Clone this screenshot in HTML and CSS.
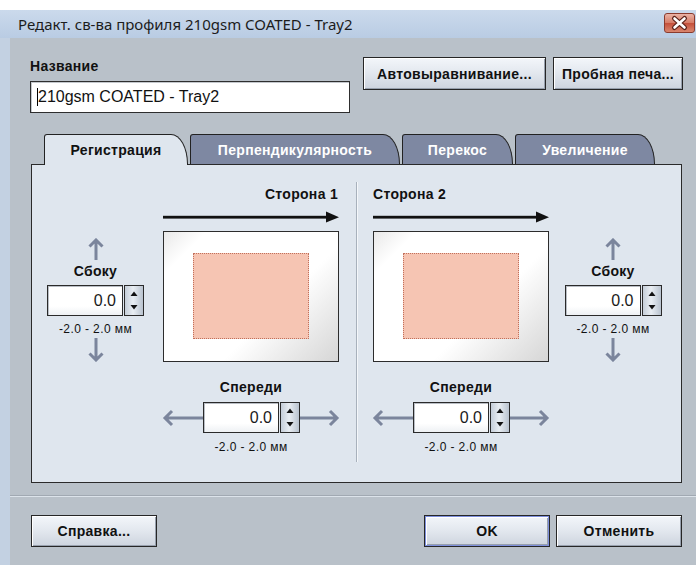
FILE: index.html
```html
<!DOCTYPE html>
<html lang="ru">
<head>
  <meta charset="UTF-8" />
  <title>Редакт. св-ва профиля</title>
  <link rel="stylesheet" href="styles.css">
</head>
<body>
  <div class="window">
    <div class="titlebar">
      <span class="title-text">Редакт. св-ва профиля 210gsm COATED - Tray2</span>
      <div class="close-btn">
        <svg width="29" height="18" viewBox="0 0 29 18">
          <path d="M9.5 4.5 L19.5 13.5 M19.5 4.5 L9.5 13.5" stroke="#5a2118" stroke-width="5" stroke-linecap="round" fill="none"/>
          <path d="M9.5 4.5 L19.5 13.5 M19.5 4.5 L9.5 13.5" stroke="#fff" stroke-width="2.6" stroke-linecap="round" fill="none"/>
        </svg>
      </div>
    </div>

    <div class="dialog">
      <div class="top-row">
        <div class="name-group">
          <span class="lbl">Название</span>
          <div class="name-field"><span class="caret"></span>210gsm COATED - Tray2</div>
        </div>
        <div class="top-buttons">
          <div class="btn btn-auto">Автовыравнивание...</div>
          <div class="btn btn-proof">Пробная печа...</div>
        </div>
      </div>

      <div class="tabs">
        <div class="tab active tab-reg">Регистрация</div>
        <div class="tab tab-perp">Перпендикулярность</div>
        <div class="tab tab-skew">Перекос</div>
        <div class="tab tab-zoom">Увеличение</div>
      </div>

      <div class="panel">
        <!-- Сторона 1 -->
        <div class="half half-left">
          <div class="side-title">Сторона 1</div>
          <svg class="feed-arrow" width="176" height="12" viewBox="0 0 176 12">
            <rect x="0" y="4.8" width="166" height="2.8" fill="#111"/>
            <polygon points="163,0.5 176,6.2 163,11.5" fill="#111"/>
          </svg>
          <div class="side-ctl">
            <svg width="16" height="22" viewBox="0 0 16 22"><path d="M8 22 V2 M1.5 8.5 L8 2 L14.5 8.5" stroke="#7b859c" stroke-width="3" fill="none"/></svg>
            <span class="lbl side-lbl">Сбоку</span>
            <div class="spinner">
              <div class="spin-value">0.0</div>
              <div class="spin-btns">
                <svg width="18" height="29" viewBox="0 0 18 29"><polygon points="5.5,10 9,5.5 12.5,10" fill="#111"/><polygon points="5.5,19 9,23.5 12.5,19" fill="#111"/></svg>
              </div>
            </div>
            <span class="range side-range">-2.0 - 2.0 мм</span>
            <svg class="down-arrow" width="16" height="24" viewBox="0 0 16 24"><path d="M8 0 V22 M1.5 15.5 L8 22 L14.5 15.5" stroke="#7b859c" stroke-width="3" fill="none"/></svg>
          </div>
          <div class="sheet"><div class="image-area"></div></div>
          <div class="front-ctl">
            <span class="lbl">Спереди</span>
            <div class="front-row">
              <svg width="41" height="18" viewBox="0 0 41 18"><path d="M41 9 H3 M10 2 L3 9 L10 16" stroke="#7b859c" stroke-width="3" fill="none"/></svg>
              <div class="spinner">
                <div class="spin-value">0.0</div>
                <div class="spin-btns">
                  <svg width="18" height="29" viewBox="0 0 18 29"><polygon points="5.5,10 9,5.5 12.5,10" fill="#111"/><polygon points="5.5,19 9,23.5 12.5,19" fill="#111"/></svg>
                </div>
              </div>
              <svg width="40" height="18" viewBox="0 0 40 18"><path d="M0 9 H37 M30 2 L37 9 L30 16" stroke="#7b859c" stroke-width="3" fill="none"/></svg>
            </div>
            <span class="range">-2.0 - 2.0 мм</span>
          </div>
        </div>

        <div class="divider"></div>

        <!-- Сторона 2 -->
        <div class="half half-right">
          <div class="side-title">Сторона 2</div>
          <svg class="feed-arrow" width="176" height="12" viewBox="0 0 176 12">
            <rect x="0" y="4.8" width="166" height="2.8" fill="#111"/>
            <polygon points="163,0.5 176,6.2 163,11.5" fill="#111"/>
          </svg>
          <div class="sheet"><div class="image-area"></div></div>
          <div class="side-ctl">
            <svg width="16" height="22" viewBox="0 0 16 22"><path d="M8 22 V2 M1.5 8.5 L8 2 L14.5 8.5" stroke="#7b859c" stroke-width="3" fill="none"/></svg>
            <span class="lbl side-lbl">Сбоку</span>
            <div class="spinner">
              <div class="spin-value">0.0</div>
              <div class="spin-btns">
                <svg width="18" height="29" viewBox="0 0 18 29"><polygon points="5.5,10 9,5.5 12.5,10" fill="#111"/><polygon points="5.5,19 9,23.5 12.5,19" fill="#111"/></svg>
              </div>
            </div>
            <span class="range side-range">-2.0 - 2.0 мм</span>
            <svg class="down-arrow" width="16" height="24" viewBox="0 0 16 24"><path d="M8 0 V22 M1.5 15.5 L8 22 L14.5 15.5" stroke="#7b859c" stroke-width="3" fill="none"/></svg>
          </div>
          <div class="front-ctl">
            <span class="lbl">Спереди</span>
            <div class="front-row">
              <svg width="41" height="18" viewBox="0 0 41 18"><path d="M41 9 H3 M10 2 L3 9 L10 16" stroke="#7b859c" stroke-width="3" fill="none"/></svg>
              <div class="spinner">
                <div class="spin-value">0.0</div>
                <div class="spin-btns">
                  <svg width="18" height="29" viewBox="0 0 18 29"><polygon points="5.5,10 9,5.5 12.5,10" fill="#111"/><polygon points="5.5,19 9,23.5 12.5,19" fill="#111"/></svg>
                </div>
              </div>
              <svg width="40" height="18" viewBox="0 0 40 18"><path d="M0 9 H37 M30 2 L37 9 L30 16" stroke="#7b859c" stroke-width="3" fill="none"/></svg>
            </div>
            <span class="range">-2.0 - 2.0 мм</span>
          </div>
        </div>
      </div>

      <div class="footer">
        <div class="btn btn-foot">Справка...</div>
        <div class="footer-right">
          <div class="btn btn-foot btn-default">OK</div>
          <div class="btn btn-foot">Отменить</div>
        </div>
      </div>
    </div>
  </div>
</body>
</html>
```

FILE: styles.css
```css
* {
  box-sizing: border-box;
}
body {
  margin: 0;
  background: #fff;
  font-family: "Liberation Sans", Arial, sans-serif;
  color: #111;
}
.window {
  margin-top: 10px;
  width: 696px;
  height: 555px;
  display: flex;
  flex-direction: column;
}

/* title bar */
.titlebar {
  height: 28px;
  flex: none;
  display: flex;
  justify-content: space-between;
  background: linear-gradient(#cbdaec, #b9cce3);
}
.title-text {
  font-family: "Noto Sans", "Open Sans", sans-serif;
  font-size: 15px;
  line-height: 28px;
  padding-left: 18px;
  color: #1c1c1c;
}
.close-btn {
  width: 31px;
  height: 20px;
  margin: 3px 1px 0 0;
  border: 1px solid #8a3b2e;
  border-radius: 3px;
  background: linear-gradient(#eab3a6, #d77d68 48%, #c5503b 52%, #d9866f);
}
.close-btn svg {
  display: block;
}

/* dialog body */
.dialog {
  flex: 1;
  background: #b9c1c9;
  border-left: 10px solid #c3d1e2;
  display: flex;
  flex-direction: column;
}
.lbl {
  display: block;
  font-weight: bold;
  font-size: 14px;
  line-height: 17px;
  letter-spacing: 0.3px;
  color: #111;
}
.top-row {
  display: flex;
  justify-content: space-between;
  padding: 19px 13px 0 20px;
}
.name-group {
  padding-top: 1px;
}
.name-field {
  margin-top: 6px;
  width: 320px;
  height: 32px;
  border: 1px solid #2e2e2e;
  background: #fff;
  box-shadow: inset 1px 1px 0 #c4c8cd;
  font-size: 16px;
  line-height: 30px;
  padding-left: 6px;
  display: flex;
  align-items: center;
}
.caret {
  width: 1px;
  height: 18px;
  background: #000;
}
.top-buttons {
  display: flex;
  gap: 7px;
}
.btn {
  height: 33px;
  border: 1px solid #262626;
  background: linear-gradient(#f3f6fa, #e2e7ee 50%, #cdd4de);
  box-shadow: inset 1px 1px 0 #fff, inset -1px -1px 0 #97a0ad;
  font-weight: bold;
  font-size: 14px;
  letter-spacing: 0.3px;
  display: flex;
  align-items: center;
  justify-content: center;
}
.btn-auto {
  width: 183px;
}
.btn-proof {
  width: 130px;
}

/* tabs */
.tabs {
  display: flex;
  gap: 2px;
  margin: 21px 0 -1px 34px;
  height: 31px;
  position: relative;
  z-index: 1;
}
.tab {
  height: 30px;
  border: 1px solid #222;
  border-bottom: none;
  border-radius: 3px 17px 0 0 / 3px 30px 0 0;
  background: #7e88a2;
  color: #fff;
  font-weight: bold;
  font-size: 14px;
  letter-spacing: 0.3px;
  display: flex;
  align-items: center;
  justify-content: center;
}
.tab.active {
  height: 31px;
  background: #dfe6ee;
  color: #111;
  padding-bottom: 1px;
}
.tab-reg {
  width: 144px;
}
.tab-perp {
  width: 210px;
}
.tab-skew {
  width: 111px;
}
.tab-zoom {
  width: 140px;
}

/* content panel */
.panel {
  margin-left: 21px;
  width: 651px;
  height: 319px;
  border: 1px solid #2a2a2a;
  background: #dfe6ee;
  display: flex;
  padding: 17px 0 0 15px;
}
.half {
  display: grid;
  padding-top: 4px;
  align-content: start;
}
.half-left {
  grid-template-columns: 97px 176px;
  column-gap: 19px;
}
.half-right {
  grid-template-columns: 176px 98px;
  column-gap: 15px;
  margin-left: 16px;
}
.half-left .side-title,
.half-left .feed-arrow,
.half-left .sheet,
.half-left .front-ctl {
  grid-column: 2;
}
.half-left .side-ctl {
  grid-column: 1;
  grid-row: 3;
}
.half-right .side-title,
.half-right .feed-arrow,
.half-right .sheet,
.half-right .front-ctl {
  grid-column: 1;
}
.half-right .side-ctl {
  grid-column: 2;
  grid-row: 3;
}
.side-title {
  font-weight: bold;
  font-size: 14px;
  line-height: 17px;
  letter-spacing: 0.3px;
}
.half-left .side-title {
  text-align: right;
  padding-right: 1px;
}
.feed-arrow {
  display: block;
  margin-top: 8px;
}
.sheet {
  margin-top: 8px;
  height: 131px;
  border: 1px solid #2c2c2c;
  background: linear-gradient(135deg, #e9e9e9 0%, #fff 14%, #fff 62%, #d6d6d6 100%);
  padding: 21px 29px 0 29px;
}
.image-area {
  height: 86px;
  background: #f6c5b3;
  border: 1px dotted #c2705b;
}
.divider {
  width: 1px;
  height: 280px;
  margin-left: 17px;
  background: #a8b1bc;
  box-shadow: 1px 0 0 #f4f7fa;
}

/* spinners and arrows */
.side-ctl {
  display: flex;
  flex-direction: column;
  align-items: center;
  align-self: end;
}
.side-ctl svg {
  display: block;
}
.side-lbl {
  margin-top: 3px;
}
.spinner {
  display: flex;
  gap: 1px;
  height: 31px;
}
.side-lbl + .spinner {
  margin-top: 5px;
}
.spin-value {
  width: 76px;
  border: 1px solid #2a2a2a;
  background: linear-gradient(#fff, #fff 70%, #eef1f4);
  box-shadow: inset 1px 1px 0 #b9bec5;
  text-align: right;
  padding-right: 6px;
  font-size: 16px;
  line-height: 29px;
  color: #1a1a1a;
}
.spin-btns {
  width: 20px;
  border: 1px solid #2a2a2a;
  background: linear-gradient(90deg, #c5ced9, #e9eef3 45%, #b9c3cf);
}
.spin-btns svg {
  display: block;
}
.range {
  display: block;
  font-size: 12px;
  line-height: 15px;
  letter-spacing: 0.4px;
  color: #111;
}
.side-range {
  margin-top: 6px;
}
.down-arrow {
  margin-top: 1px;
}
.front-ctl {
  margin-top: 17px;
  display: flex;
  flex-direction: column;
  align-items: center;
}
.front-row {
  margin-top: 6px;
  display: flex;
  align-items: center;
}
.front-ctl .range {
  margin-top: 7px;
}

/* footer */
.footer {
  margin-top: 12px;
  border-top: 1px solid #a1a9b2;
  box-shadow: inset 0 1px 0 #dce3ea;
  padding: 19px 14px 0 21px;
  display: flex;
  justify-content: space-between;
}
.footer-right {
  display: flex;
  gap: 6px;
}
.btn-foot {
  width: 126px;
  height: 32px;
}
.btn-default {
  box-shadow: inset 0 0 0 1px #7d8fdc, inset 2px 2px 0 #fff, inset -2px -2px 0 #97a0ad;
}
```
